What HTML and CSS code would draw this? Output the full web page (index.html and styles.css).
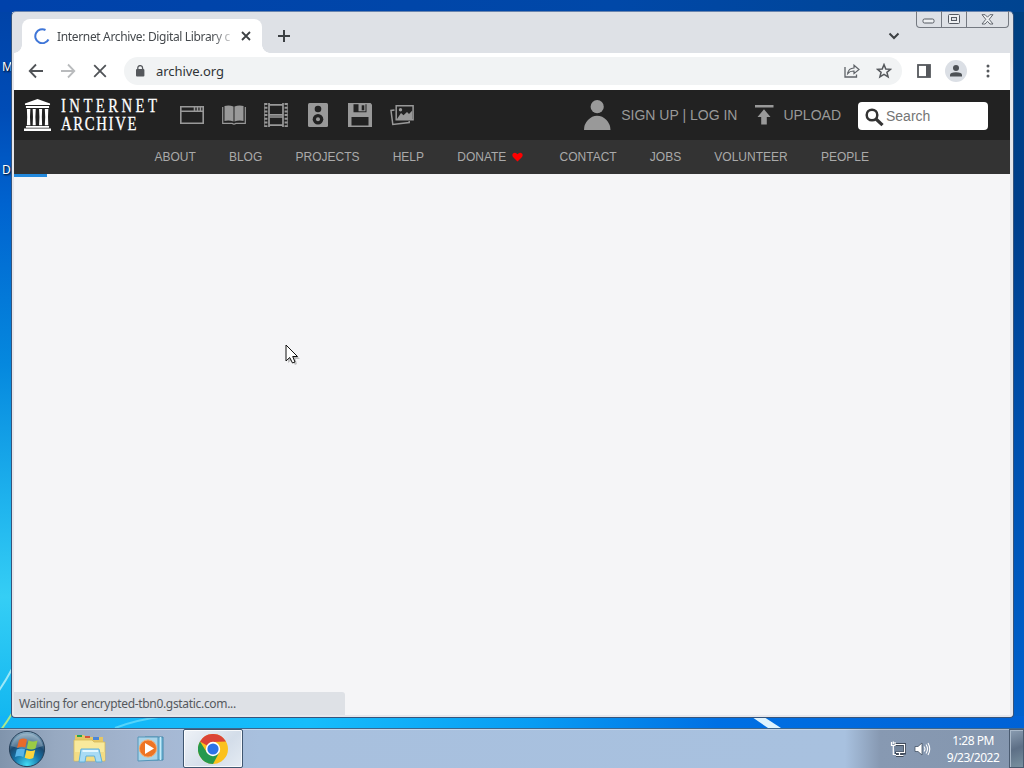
FILE: index.html
```html
<!DOCTYPE html>
<html lang="en">
  <head>
    <meta charset="utf-8" />
    <title>Internet Archive: Digital Library</title>
    <link rel="stylesheet" href="styles.css">
  </head>

  <body>
    <main class="desktop">
      <span class="desktop-label label-m">M</span>
      <span class="desktop-label label-d">D</span>
      <svg class="wallpaper-rays" width="1024" height="768">
        <path d="M-2 692 Q5 682 12 669" stroke="#9ce8f8" stroke-width="2" fill="none" />
        <path d="M-2 734 Q7 722 13 712" stroke="#a8e890" stroke-width="2" fill="none" />
        <path d="M115 728 Q135 720 165 716" stroke="#55d4fa" stroke-width="2" fill="none" />
        <path d="M752 717 L764 717 L781 728 L768 728 Z" fill="#dff3fd" />
      </svg>

      <section class="window">
        <div class="tabstrip">
          <div class="tab">
            <svg class="spinner" width="16" height="16" viewBox="0 0 16 16">
              <path d="M11.5 2 A7 7 0 1 0 14.5 11.5" fill="none" stroke="#3f76d8" stroke-width="2" />
            </svg>
            <span class="tab-title">Internet Archive: Digital Library c</span>
            <svg width="10" height="10" viewBox="0 0 10 10">
              <path d="M1 1 L9 9 M9 1 L1 9" stroke="#3c4043" stroke-width="1.8" />
            </svg>
          </div>
          <svg class="new-tab" width="12" height="12" viewBox="0 0 12 12">
            <path d="M6 0 V12 M0 6 H12" stroke="#3c4043" stroke-width="2" />
          </svg>
          <svg class="tab-search" width="12" height="8" viewBox="0 0 12 8">
            <path d="M1.5 1.5 L6 6 L10.5 1.5" fill="none" stroke="#3c4043" stroke-width="2" />
          </svg>
          <div class="caption-buttons">
            <span class="cap min">
              <svg width="14" height="6"><rect x="1" y="1" width="11" height="4" rx="1.5" fill="#eef0f2" stroke="#555a62" /></svg>
            </span>
            <span class="cap max">
              <svg width="13" height="11"><rect x=".5" y=".5" width="11" height="9" rx="1" fill="#eef0f2" stroke="#555a62" /><rect x="3.5" y="3.5" width="5" height="3" fill="#dee1e6" stroke="#555a62" /></svg>
            </span>
            <span class="cap close">
              <svg width="13" height="11" viewBox="0 0 13 11"><path d="M1 .7 H4.1 L6.5 3.2 L8.9 .7 H12 L8.2 5.3 L12 10 H8.9 L6.5 7.3 L4.1 10 H1 L4.8 5.3 Z" fill="#eef0f2" stroke="#555a62" stroke-width=".9" /></svg>
            </span>
          </div>
        </div>

        <div class="toolbar">
          <svg width="16" height="16" viewBox="0 0 16 16">
            <path d="M15 8 H2 M8 1.5 L1.7 8 L8 14.5" fill="none" stroke="#505357" stroke-width="1.8" />
          </svg>
          <svg width="16" height="16" viewBox="0 0 16 16">
            <path d="M1 8 H14 M8 1.5 L14.3 8 L8 14.5" fill="none" stroke="#b9bbbd" stroke-width="1.8" />
          </svg>
          <svg width="16" height="16" viewBox="0 0 16 16">
            <path d="M2.2 2.2 L13.8 13.8 M13.8 2.2 L2.2 13.8" stroke="#505357" stroke-width="1.8" />
          </svg>
          <div class="omnibox">
            <svg width="10" height="12" viewBox="0 0 10 12">
              <rect x="1" y="4" width="8.4" height="7.4" rx="1" fill="#55585c" />
              <path d="M2.8 5 V3 A2.3 2.3 0 0 1 7.6 3 V5" fill="none" stroke="#55585c" stroke-width="1.3" />
            </svg>
            <span class="url">archive.org</span>
            <svg class="share" width="16" height="14" viewBox="0 0 16 14">
              <path d="M1 3 V13 H12.5 V10.5" fill="none" stroke="#5f6368" stroke-width="1.3" />
              <path d="M3.7 9.5 Q4.5 4.2 10 4 V1.2 L15 5.5 L10 9.6 V7 Q6 6.8 3.7 9.5 Z" fill="none" stroke="#5f6368" stroke-width="1.2" />
            </svg>
            <svg width="16" height="16" viewBox="0 0 16 16">
              <path d="M8 1.6 L9.8 6 L14.5 6.3 L10.9 9.3 L12.1 13.9 L8 11.4 L3.9 13.9 L5.1 9.3 L1.5 6.3 L6.2 6 Z" fill="none" stroke="#55585c" stroke-width="1.5" />
            </svg>
          </div>
          <svg class="panel" width="14" height="14" viewBox="0 0 14 14">
            <rect x="1" y="1" width="12" height="12" fill="none" stroke="#55585c" stroke-width="1.8" />
            <rect x="9" y="1" width="4" height="12" fill="#55585c" />
          </svg>
          <span class="avatar">
            <svg width="14" height="14" viewBox="0 0 14 14" fill="#4d5156">
              <circle cx="7" cy="4" r="3" />
              <path d="M1 12.5 V11 Q1 8.3 7 8.3 Q13 8.3 13 11 V12.5 Z" />
            </svg>
          </span>
          <svg width="4" height="14" viewBox="0 0 4 14" fill="#55585c">
            <circle cx="2" cy="2" r="1.5" /><circle cx="2" cy="7" r="1.5" /><circle cx="2" cy="12" r="1.5" />
          </svg>
        </div>

        <div class="page">
          <header class="topbar">
            <svg class="building" width="27" height="32" viewBox="0 0 28 32" preserveAspectRatio="none" fill="#fff">
              <path d="M1 4.5 L14 0 L27 4.5 V6 H1 Z M2 7 H26 V9 H2 Z M0 29.5 H28 V32 H0 Z M2 27 H26 V28.7 H2 Z" />
              <path d="M3 10 H6.6 L6.2 18 L6.6 26.2 H3 L3.3 18 Z M9 10 H12.2 L11.8 18 L12.2 26.2 H9 L9.3 18 Z M15.6 10 H18.8 L18.5 18 L18.8 26.2 H15.6 L16 18 Z M21.6 10 H25.2 L24.9 18 L25.2 26.2 H21.6 L22 18 Z" />
            </svg>
            <svg class="wordmark" width="98" height="40">
              <g transform="scale(.82 1)">
                <text x="0" y="17" textLength="117">INTERNET</text>
                <text x="0" y="35" textLength="92">ARCHIVE</text>
              </g>
            </svg>

            <div class="media">
              <svg width="24" height="24" viewBox="0 0 24 24">
                <path fill="none" stroke="#999" stroke-width="1.6" d="M.8 3.8 H23.2 V20.2 H.8 Z M.8 8.2 H23.2 M14.5 4 V8 M17.5 4 V8 M20.4 4 V8" />
              </svg>
              <svg width="24" height="24" viewBox="0 0 24 24">
                <path fill="#999" d="M2.5 3 Q7 1.8 11.5 3.4 V18.5 Q7 17 2.5 18 Z M12.5 3.4 Q17 1.8 21.5 3 V18 Q17 17 12.5 18.5 Z" />
                <path fill="none" stroke="#999" stroke-width="1.2" d="M.7 4 V20.3 H10 Q12 22 14 20.3 H23.3 V4" />
              </svg>
              <svg width="24" height="24" viewBox="0 0 24 24">
                <path fill="none" stroke="#999" stroke-width="1.7" d="M5 0 V24 M19 0 V24 M5 1.8 H19 M5 11.8 H19 M5 14 H19 M5 22.2 H19" />
                <path stroke="#999" stroke-width="3" stroke-dasharray="2 1.7" d="M1.9 0 V24 M22.1 0 V24" />
                <path stroke="#999" stroke-width=".7" d="M.6 0 V24 M23.4 0 V24" />
              </svg>
              <svg width="24" height="24" viewBox="0 0 24 24">
                <rect x="2" width="20" height="24" rx="1.5" fill="#999" />
                <circle cx="12" cy="6" r="3.3" fill="#222" />
                <circle cx="12" cy="16.3" r="5.3" fill="#222" />
                <circle cx="12" cy="16.3" r="2" fill="#999" />
              </svg>
              <svg width="24" height="24" viewBox="0 0 24 24">
                <path fill="#999" d="M0 0 H22.5 L24 1.5 V24 H0 Z" />
                <path fill="#222" d="M5.5 1.2 H18.5 V9.3 H5.5 Z M3.5 14 H20.5 V22.5 H3.5 Z" />
                <path fill="#999" d="M10.5 1 H17.5 V8.3 H10.5 Z" />
                <path fill="#222" d="M13.7 2.3 H16.3 V7.3 H13.7 Z" />
              </svg>
              <svg width="24" height="24" viewBox="0 0 24 24">
                <path fill="none" stroke="#999" stroke-width="1.5" d="M6.2 2.8 H23.1 V16.8 H6.2 Z M4.5 7 L1 7.5 L2.8 21.5 L19.2 19.5 V18" />
                <path fill="#999" d="M7 16 L11 10 L13.5 12.2 L17 9 L19 11 L22.3 7.5 V16 Z" />
                <circle cx="10.5" cy="6.7" r="1.7" fill="#999" />
              </svg>
            </div>

            <a class="login">
              <svg width="27" height="30" viewBox="0 0 27 30" fill="#999">
                <circle cx="13.2" cy="6.7" r="6.6" />
                <path d="M0 30 Q0 24 4 20 Q8 15.7 13 15.7 Q18.5 15.7 22.5 20 Q26.5 24.5 26.5 30 Z" />
              </svg>
              <span>SIGN UP | LOG IN</span>
            </a>
            <a class="upload">
              <svg width="20" height="20" viewBox="0 0 20 20" fill="#999">
                <path d="M1 0 H19.5 V2.6 H1 Z M10 4.2 L16.5 12 H12.8 V19.5 H7.2 V12 H3.5 Z" />
              </svg>
              <span>UPLOAD</span>
            </a>
            <div class="search">
              <svg width="19" height="19" viewBox="0 0 19 19">
                <circle cx="7" cy="7" r="5.3" fill="none" stroke="#333" stroke-width="2.5" />
                <path d="M11 11 L17.5 17.2" stroke="#333" stroke-width="3.2" />
              </svg>
              <span>Search</span>
            </div>
          </header>

          <nav class="links">
            <a>ABOUT</a>
            <a>BLOG</a>
            <a>PROJECTS</a>
            <a>HELP</a>
            <a class="donate">DONATE
              <svg width="11" height="10" viewBox="0 0 11 10"><path fill="#f00" d="M5.5 9.5 L1 5 Q-.3 3 1 1.4 Q3.4 -.4 5.5 2.2 Q7.6 -.4 10 1.4 Q11.3 3 10 5 Z" /></svg>
            </a>
            <a>CONTACT</a>
            <a>JOBS</a>
            <a>VOLUNTEER</a>
            <a>PEOPLE</a>
          </nav>
          <div class="progress"></div>
          <div class="status"><span>Waiting for encrypted-tbn0.gstatic.com...</span></div>
        </div>
      </section>

      <footer class="taskbar">
        <svg class="start" width="38" height="38" viewBox="0 0 38 38">
          <defs>
            <radialGradient id="orb" cx=".5" cy=".95" r=".95">
              <stop offset="0" stop-color="#42dcf4" />
              <stop offset=".4" stop-color="#1673a8" />
              <stop offset=".65" stop-color="#1c4a70" />
              <stop offset="1" stop-color="#8fb2c8" />
            </radialGradient>
          </defs>
          <circle cx="19" cy="19" r="17.6" fill="url(#orb)" stroke="#263f58" />
          <path d="M3 16 A16.5 16.5 0 0 1 35 16 Q19 22 3 16 Z" fill="#fff" opacity=".25" />
          <path fill="#e86a2a" d="M11 10 Q15 7.5 19 9.5 L17.3 17.5 Q13.5 16 9 18 Z" />
          <path fill="#9acb45" d="M20.5 10.2 Q24.5 12.5 29.5 10.5 L27.5 18.5 Q23 20.5 18.8 18.2 Z" />
          <path fill="#58b4e8" d="M8.7 19.5 Q13 17.5 17 19.2 L15.3 27 Q11.5 25.2 7 27 Z" />
          <path fill="#fbd53e" d="M18.5 20 Q23 22 27.2 20 L25.3 28 Q21 30 16.7 27.8 Z" />
        </svg>
        <svg class="explorer" width="34" height="32" viewBox="0 0 34 32">
          <path d="M2 4 V2 H11 L13 4 H30 V27 H2 Z" fill="#e5c766" />
          <path d="M4 2 H9 V4 H4 Z" fill="#28a54a" />
          <path d="M12 3 H17 V5 H12 Z" fill="#d5533b" />
          <path d="M20 4 H26 V7 H20 Z" fill="#4b86d8" />
          <path d="M1 7 H19 L21 9 H32 V28 H1 Z" fill="#f8e99c" stroke="#d5b95a" stroke-width=".8" />
          <path d="M2 19 H32 V27 H2 Z" fill="#f3dc83" />
          <path d="M6 29 L8 16 H26 L29 29 H23 L21.5 23 H13 L12 29 Z" fill="#a9dbf4" stroke="#5fb0da" />
          <path d="M9.5 18 H25" stroke="#e4f7ff" stroke-width="2" />
        </svg>
        <svg class="player" width="30" height="28" viewBox="0 0 30 28">
          <path d="M8 2 H26 V25 H8 Z" fill="#71b8d8" stroke="#4387ab" />
          <path d="M23.5 2 V25" stroke="#c4ebf8" stroke-width="1.5" />
          <path d="M1 2 H21 V25 L1 26 Z" fill="#a9d4e9" stroke="#5596b9" />
          <circle cx="11" cy="13.5" r="8.6" fill="#ee7424" stroke="#f7aa6c" />
          <path d="M8 8 L17 13.5 L8 19 Z" fill="#fff" />
        </svg>
        <div class="task active">
          <svg width="30" height="30" viewBox="0 0 30 30">
            <circle cx="15" cy="15" r="15" fill="#fbc11c" />
            <path d="M15 15 L2 7.5 A15 15 0 0 1 28 7.5 L15 8 Z" fill="#db4437" />
            <path d="M2 7.5 A15 15 0 0 0 15 30 L21.2 18.5 L15 15 L8.9 18.5 Z" fill="#25994e" />
            <circle cx="15" cy="15" r="7.2" fill="#fff" />
            <circle cx="15" cy="15" r="5.6" fill="#2c73e8" />
          </svg>
        </div>
        <div class="tray">
          <svg width="16" height="16" viewBox="0 0 16 16">
            <path d="M4 3.5 H14.5 V12 H5 M9.5 12 V14.5 M6 14.5 H13.5" fill="#71839a" stroke="#404b5b" stroke-width="3" />
            <path d="M5.5 3.5 H14.5 V11.5 H6 M9.5 12 V14.5 M6 14.5 H13.5 M1.5 1 V4.5 H5 V1 M3.3 5 V13.5 H6 M3.3 .5 V3" fill="none" stroke="#fff" stroke-width="1.2" />
          </svg>
          <svg width="17" height="16" viewBox="0 0 17 16">
            <path d="M1 5.5 H4 L8 2 V14 L4 10.5 H1 Z" fill="#fff" stroke="#455366" stroke-width=".8" />
            <path d="M10 5.5 Q12 8 10 10.5 M12 3.5 Q15 8 12 12.5 M14 2 Q17.5 8 14 14" fill="none" stroke="#fff" stroke-width="1.1" />
          </svg>
        </div>
        <div class="clock">
          <span class="time">1:28 PM</span>
          <span class="date">9/23/2022</span>
        </div>
        <div class="show-desktop"></div>
      </footer>

      <svg class="cursor" width="16" height="22" viewBox="0 0 16 22">
        <path d="M3 3 V19 L7 16 L10 21 L12 20 L10.5 15 H15 Z" fill="#000" opacity=".22" />
        <path d="M1 1 V17 L4.7 13.5 L7.5 19 L10 18 L7.7 12.5 H12.5 Z" fill="#fff" stroke="#111" />
      </svg>
    </main>
  </body>
</html>
```

FILE: styles.css
```css
/* ------------------------------ reset ------------------------------ */
* {
  margin: 0;
  padding: 0;
  box-sizing: border-box;
}
svg {
  display: block;
  flex: none;
}

/* ------------------------------ desktop ------------------------------ */
.desktop {
  position: relative;
  width: 1024px;
  height: 768px;
  overflow: hidden;
  font-family: "Noto Sans", sans-serif;
  background:
    linear-gradient(to right, #0042ab, #0048a8 60%, #004490) 0 0 / 1024px 12px no-repeat,
    linear-gradient(to right, #12b4f6, #16bdfb 30%, #089cf3 52%, #0070e4 70%, #0062d6) 0 716px / 1024px 12px no-repeat,
    linear-gradient(#0042a6, #004cb6 15%, #0063cf 28%, #0588de 50%, #20b5ee 70%, #35cef5 82%, #10b5f0) 0 0 / 12px 728px no-repeat,
    linear-gradient(#004080, #003f8c 30%, #0050ae 60%, #0062cf) 100% 0 / 12px 728px no-repeat;
}
.wallpaper-rays {
  position: absolute;
  inset: 0;
}
.desktop-label {
  position: absolute;
  left: 2px;
  font-size: 12px;
  line-height: 16px;
  color: #fff;
  text-shadow: 1px 1px 2px #000;
}
.label-m {
  top: 59px;
}
.label-d {
  top: 162px;
}
.cursor {
  position: absolute;
  left: 285px;
  top: 344px;
}

/* ------------------------------ window ------------------------------ */
.window {
  position: absolute;
  left: 11px;
  top: 11px;
  width: 1003px;
  height: 707px;
  display: flex;
  flex-direction: column;
  padding: 0 3px 2px 2px;
  border: 1px solid #36547c;
  border-top-color: #6984ae;
  border-radius: 5px 5px 4px 4px;
  background: linear-gradient(#dee1e6, #dee1e6 45px, #e6e7ec 60px);
}

.tabstrip {
  display: flex;
  align-items: flex-start;
  height: 41px;
  flex: none;
}
.tab {
  position: relative;
  display: flex;
  align-items: center;
  width: 240px;
  height: 34px;
  margin: 7px 0 0 8px;
  padding-left: 12px;
  border-radius: 8px 8px 0 0;
  background: #fff;
}
.tab::before,
.tab::after {
  content: "";
  position: absolute;
  bottom: 0;
  width: 8px;
  height: 8px;
}
.tab::before {
  left: -8px;
  background: radial-gradient(circle at 0 0, transparent 7.5px, #fff 8px);
}
.tab::after {
  right: -8px;
  background: radial-gradient(circle at 100% 0, transparent 7.5px, #fff 8px);
}
.tab-title {
  width: 176px;
  margin: 0 8px 0 7px;
  white-space: nowrap;
  font-size: 12px;
  letter-spacing: -0.34px;
  color: #45494d;
  -webkit-mask-image: linear-gradient(to right, #000 155px, transparent 180px);
}
.new-tab {
  margin: 18px 0 0 16px;
}
.tab-search {
  margin: 20px 16px 0 auto;
}
.caption-buttons {
  display: flex;
  width: 93px;
  height: 17px;
  margin: -1px 1px 0 0;
  border: 1px solid #747981;
  border-top: 0;
  border-radius: 0 0 4px 4px;
}
.cap {
  display: flex;
  align-items: center;
  justify-content: center;
  width: 25px;
  border-right: 1px solid #747981;
}
.cap.min {
  padding-top: 4px;
}
.cap.close {
  flex: 1;
  border-right: 0;
}

/* ------------------------------ toolbar ------------------------------ */
.toolbar {
  display: flex;
  align-items: center;
  gap: 16px;
  height: 37px;
  flex: none;
  padding: 0 20px 2px 14px;
  background: #fff;
}
.omnibox {
  display: flex;
  align-items: center;
  flex: 1;
  height: 28px;
  padding: 0 10px 0 11px;
  border-radius: 14px;
  background: #f1f3f4;
}
.url {
  margin-left: 11px;
  font-size: 13px;
  letter-spacing: -0.05px;
  color: #303337;
}
.share {
  margin: 0 16px 0 auto;
}
.panel {
  margin-left: -1px;
}
.avatar {
  display: flex;
  align-items: center;
  justify-content: center;
  width: 22px;
  height: 22px;
  margin: 0 3px 0 -2px;
  border-radius: 50%;
  background: #dbdfe5;
}

/* ------------------------------ page ------------------------------ */
.page {
  display: flex;
  flex-direction: column;
  flex: 1;
  background: #f5f5f7;
  font-family: "Liberation Sans", Arial, sans-serif;
}
.topbar {
  display: flex;
  align-items: center;
  height: 50px;
  padding: 0 22px 0 10px;
  background: #222;
  color: #999;
  font-size: 14px;
}
.wordmark {
  margin-left: 10px;
  overflow: visible;
  fill: #fff;
  stroke: #fff;
  stroke-width: 0.25px;
  font-family: "Liberation Serif", serif;
  font-size: 18px;
}
.media {
  display: flex;
  gap: 18px;
  margin-left: 21px;
}
.login,
.upload {
  display: flex;
  align-items: center;
  white-space: nowrap;
}
.login {
  gap: 10px;
  margin-left: auto;
}
.upload {
  gap: 9px;
  margin-left: 17px;
}
.search {
  display: flex;
  align-items: center;
  gap: 2px;
  width: 130px;
  height: 28px;
  margin: 2px 0 0 17px;
  padding-left: 7px;
  border-radius: 4px;
  background: #fff;
  color: #757575;
}
.search svg {
  margin-top: 3px;
}
.links {
  display: flex;
  align-items: center;
  gap: 33.2px;
  height: 34px;
  padding-left: 140.4px;
  background: #333;
  color: #aaa;
  font-size: 12px;
}
.donate {
  display: flex;
  align-items: center;
  gap: 6px;
  margin-right: 3px;
}
.progress {
  width: 33px;
  height: 3px;
  background: #2389dd;
}
.status {
  display: flex;
  align-items: center;
  width: 331px;
  height: 23px;
  margin-top: auto;
  padding-left: 5px;
  border-radius: 0 3px 0 0;
  background: #dee1e6;
  font-family: "Noto Sans", sans-serif;
  font-size: 12px;
  letter-spacing: -0.32px;
  color: #55595e;
}

/* ------------------------------ taskbar ------------------------------ */
.taskbar {
  position: absolute;
  left: 0;
  bottom: 0;
  width: 1024px;
  height: 40px;
  display: flex;
  align-items: center;
  border-top: 1px solid #3e668c;
  background: linear-gradient(to right, #8094ac, #97a9c1 55px, #a5b7d2 150px, #a8c0de 260px, #a8c1df 845px, #8799b2 880px, #8496ae);
  box-shadow: inset 0 1px 0 rgba(255, 255, 255, 0.35);
}
.start {
  margin-left: 8px;
}
.explorer {
  margin-left: 27px;
}
.player {
  margin-left: 30px;
}
.task {
  display: flex;
  align-items: center;
  justify-content: center;
  width: 60px;
  height: 39px;
  margin-left: 16px;
  border: 1px solid #3f5670;
  border-radius: 2px;
  background: linear-gradient(135deg, #eef2f7, #d3dde9 60%, #e5ebf3);
  box-shadow: inset 0 0 0 1px rgba(255, 255, 255, 0.8);
}
.tray {
  display: flex;
  gap: 8px;
  margin-left: auto;
}
.clock {
  display: flex;
  flex-direction: column;
  align-items: center;
  width: 52px;
  margin: 0 10px 0 16px;
  font-size: 12px;
  line-height: 17px;
  letter-spacing: -0.5px;
  white-space: nowrap;
  color: #fff;
}
.show-desktop {
  width: 15px;
  height: 39px;
  border: 1px solid #4a5b70;
  box-shadow: inset 1px 1px 0 #a9b8c9;
  background: linear-gradient(160deg, #8b9db2, #5d6f86 50%, #78909f);
}
```
